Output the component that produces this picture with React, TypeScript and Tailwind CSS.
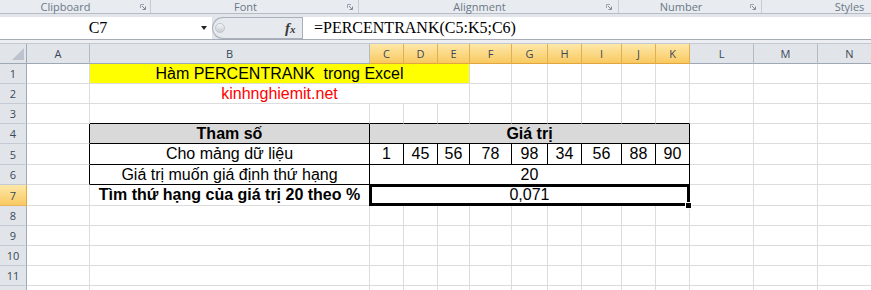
import React from "react";

const G = "border-r border-b border-r-[#dadcdd] border-b-[#dadcdd]";
const COLS = ["A", "B", "C", "D", "E", "F", "G", "H", "I", "J", "K", "L", "M", "N"];
const SEL = new Set(["C", "D", "E", "F", "G", "H", "I", "J", "K"]);

function Launcher() {
  return (
    <svg width="6" height="6" viewBox="0 0 6 6" className="block">
      <path d="M0.5 4 V0.5 H4" fill="none" stroke="#9aa5b1" strokeWidth="1" />
      <path d="M2 2 L5 5" stroke="#7f8a97" strokeWidth="1" />
      <path d="M5.5 2.5 V5.5 H2.5" fill="none" stroke="#7f8a97" strokeWidth="1" />
    </svg>
  );
}

function RowHead({ n, sel }: { n?: number; sel?: boolean }) {
  return sel ? (
    <div className="flex items-center justify-center bg-linear-to-b from-[#fde8a8] to-[#f9c95f] border-r border-b border-r-[#e2a63e] border-b-[#e6b45c] text-[11px] text-[#3b4857] font-['Open_Sans',sans-serif]">
      {n}
    </div>
  ) : (
    <div className="flex items-center justify-center bg-[#e1e5ea] border-r border-b border-r-[#9eabb9] border-b-[#c3cad3] text-[11px] text-[#3b4857] font-['Open_Sans',sans-serif]">
      {n}
    </div>
  );
}

function Plain({ cols, r }: { cols: string[]; r: number }) {
  return (
    <>
      {cols.map((c) => (
        <div key={c + r} className={G} />
      ))}
    </>
  );
}

export default function App() {
  return (
    <div className="w-[871px] h-[290px] overflow-hidden bg-white font-['Liberation_Sans',Arial,sans-serif]">
      {/* ribbon group labels */}
      <div className="h-[13px] flex bg-[#e8ebef] text-[11px] leading-[13px] text-[#6b7888] font-['Open_Sans',sans-serif] whitespace-nowrap">
        <div className="w-[151px] shrink-0 flex items-center border-r border-r-[#c5ccd4]">
          <span className="w-[131px] text-center">Clipboard</span>
          <span className="ml-[9px]"><Launcher /></span>
        </div>
        <div className="w-[208px] shrink-0 flex items-center border-r border-r-[#c5ccd4]">
          <span className="w-[189px] text-center">Font</span>
          <span className="ml-[7px]"><Launcher /></span>
        </div>
        <div className="w-[260px] shrink-0 flex items-center border-r border-r-[#c5ccd4]">
          <span className="w-[241px] text-center">Alignment</span>
          <span className="ml-[6px]"><Launcher /></span>
        </div>
        <div className="w-[143px] shrink-0 flex items-center border-r border-r-[#c5ccd4]">
          <span className="w-[124px] text-center">Number</span>
          <span className="ml-[7px]"><Launcher /></span>
        </div>
        <div className="w-[175px] shrink-0 flex items-center">
          <span className="w-[175px] text-center">Styles</span>
        </div>
      </div>
      <div className="h-px bg-[#b6bdc6]" />
      <div className="h-[3px] bg-[#e2e6eb]" />
      {/* formula bar */}
      <div className="h-[22px] flex bg-[#e2e6eb]">
        <div className="w-[212px] shrink-0 flex items-center bg-white">
          <span className="w-[196px] text-center text-[16px] leading-none font-['Liberation_Serif',serif] text-black">C7</span>
          <span className="ml-[5px] w-0 h-0 border-l-[3px] border-r-[3px] border-t-[4px] border-l-transparent border-r-transparent border-t-[#222]" />
        </div>
        <div className="w-[90px] shrink-0 flex items-center rounded-l-full border border-r-0 border-[#a9b0b9] bg-[#e6e9ed]">
          <span className="ml-[2px] w-[10px] h-[10px] rounded-full bg-linear-to-b from-[#f4f5f7] to-[#c9ced5] border border-[#c0c6ce]" />
          <span className="ml-[60px] font-['Liberation_Serif',serif] italic font-bold text-[15px] leading-none text-[#3a3a3a]">
            f<span className="text-[11px]">x</span>
          </span>
        </div>
        <div className="flex-1 flex items-center bg-white border-l border-l-[#a9b0b9] pl-[11px] text-[16px] leading-none font-['Liberation_Serif',serif] text-black">
          =PERCENTRANK(C5:K5;C6)
        </div>
      </div>
      <div className="h-px bg-[#a4abb4]" />
      <div className="h-[3px] bg-[#eceef1]" />
      <div className="h-px bg-[#c3c9d1]" />
      {/* sheet */}
      <div className="relative w-max grid grid-cols-[27px_63px_280px_34px_34px_32px_42px_36px_34px_40px_34px_34px_64px_64px_64px] grid-rows-[20px_20px_20px_20px_20px_21px_20px_21px_20px_20px_20px_20px_20px] text-[16px] leading-none text-black">
        {/* header row */}
        <div className="relative bg-[#e1e5ea] border-r border-b border-r-[#9eabb9] border-b-[#9ea8b4]">
          <svg width="12" height="12" viewBox="0 0 12 12" className="absolute right-[2px] bottom-[3px]">
            <path d="M12 0 L12 12 L0 12 Z" fill="#bcc3cc" />
          </svg>
        </div>
        {COLS.map((c) =>
          SEL.has(c) ? (
            <div key={c} className="flex items-center justify-center bg-linear-to-b from-[#fde8a8] to-[#f9c95f] border-r border-b border-r-[#e2ae52] border-b-[#e2a63e] text-[11px] text-[#3b4857] font-['Open_Sans',sans-serif]">
              {c}
            </div>
          ) : (
            <div key={c} className="flex items-center justify-center bg-[#e1e5ea] border-r border-b border-r-[#b3bbc5] border-b-[#9ea8b4] text-[11px] text-[#3b4857] font-['Open_Sans',sans-serif]">
              {c}
            </div>
          )
        )}

        {/* row 1 */}
        <RowHead n={1} />
        <div className={G} />
        <div className="col-span-4 flex items-center justify-center bg-[#ffff00] border-r border-b border-r-[#dadcdd] border-b-[#dadcdd] whitespace-pre">
          Hàm PERCENTRANK  trong Excel
        </div>
        <Plain cols={["F", "G", "H", "I", "J", "K", "L", "M", "N"]} r={1} />

        {/* row 2 */}
        <RowHead n={2} />
        <div className={G} />
        <div className="col-span-4 flex items-center justify-center text-[#ff0000] border-r border-b border-r-[#dadcdd] border-b-[#dadcdd]">
          kinhnghiemit.net
        </div>
        <Plain cols={["F", "G", "H", "I", "J", "K", "L", "M", "N"]} r={2} />

        {/* row 3 */}
        <RowHead n={3} />
        <div className={G} />
        {["B", "C", "D", "E", "F", "G", "H", "I", "J", "K"].map((c) => (
          <div key={c + "3"} className="border-r border-b border-r-[#dadcdd] border-b-black" />
        ))}
        <Plain cols={["L", "M", "N"]} r={3} />

        {/* row 4 */}
        <RowHead n={4} />
        <div className="border-r border-b border-r-black border-b-[#dadcdd]" />
        <div className="flex items-center justify-center font-bold bg-[#d9d9d9] border-r border-b border-r-black border-b-black">
          Tham số
        </div>
        <div className="col-span-9 flex items-center justify-center font-bold bg-[#d9d9d9] border-r border-b border-r-black border-b-black">
          Giá trị
        </div>
        <Plain cols={["L", "M", "N"]} r={4} />

        {/* row 5 */}
        <RowHead n={5} />
        <div className="border-r border-b border-r-black border-b-[#dadcdd]" />
        <div className="flex items-center justify-center border-r border-b border-r-black border-b-black">
          Cho mảng dữ liệu
        </div>
        {["1", "45", "56", "78", "98", "34", "56", "88", "90"].map((v, i) => (
          <div key={"v" + i} className="flex items-center justify-center border-r border-b border-r-black border-b-black">
            {v}
          </div>
        ))}
        <Plain cols={["L", "M", "N"]} r={5} />

        {/* row 6 */}
        <RowHead n={6} />
        <div className="border-r border-b border-r-black border-b-[#dadcdd]" />
        <div className="flex items-center justify-center border-r border-b border-r-black border-b-black">
          Giá trị muốn giá định thứ hạng
        </div>
        <div className="col-span-9 flex items-center justify-center border-r border-b border-r-black border-b-black">
          20
        </div>
        <Plain cols={["L", "M", "N"]} r={6} />

        {/* row 7 */}
        <RowHead n={7} sel />
        <div className={G} />
        <div className="flex items-center justify-center font-bold border-r border-b border-r-black border-b-[#dadcdd]">
          Tìm thứ hạng của giá trị 20 theo %
        </div>
        <div className="col-span-9 flex items-center justify-center border-r border-b border-r-black border-b-black">
          0,071
        </div>
        <Plain cols={["L", "M", "N"]} r={7} />

        {[8, 9, 10, 11].map((r) => (
          <React.Fragment key={r}>
            <RowHead n={r} />
            <Plain cols={COLS} r={r} />
          </React.Fragment>
        ))}
        <RowHead />
        <Plain cols={COLS} r={12} />

        {/* selection overlay */}
        <div className="absolute left-[369px] top-[140px] w-[321px] h-[22px] border-[3px] border-black pointer-events-none" />
        <div className="absolute left-[685px] top-[158px] w-[7px] h-[7px] bg-black border border-white pointer-events-none" />
      </div>
    </div>
  );
}
